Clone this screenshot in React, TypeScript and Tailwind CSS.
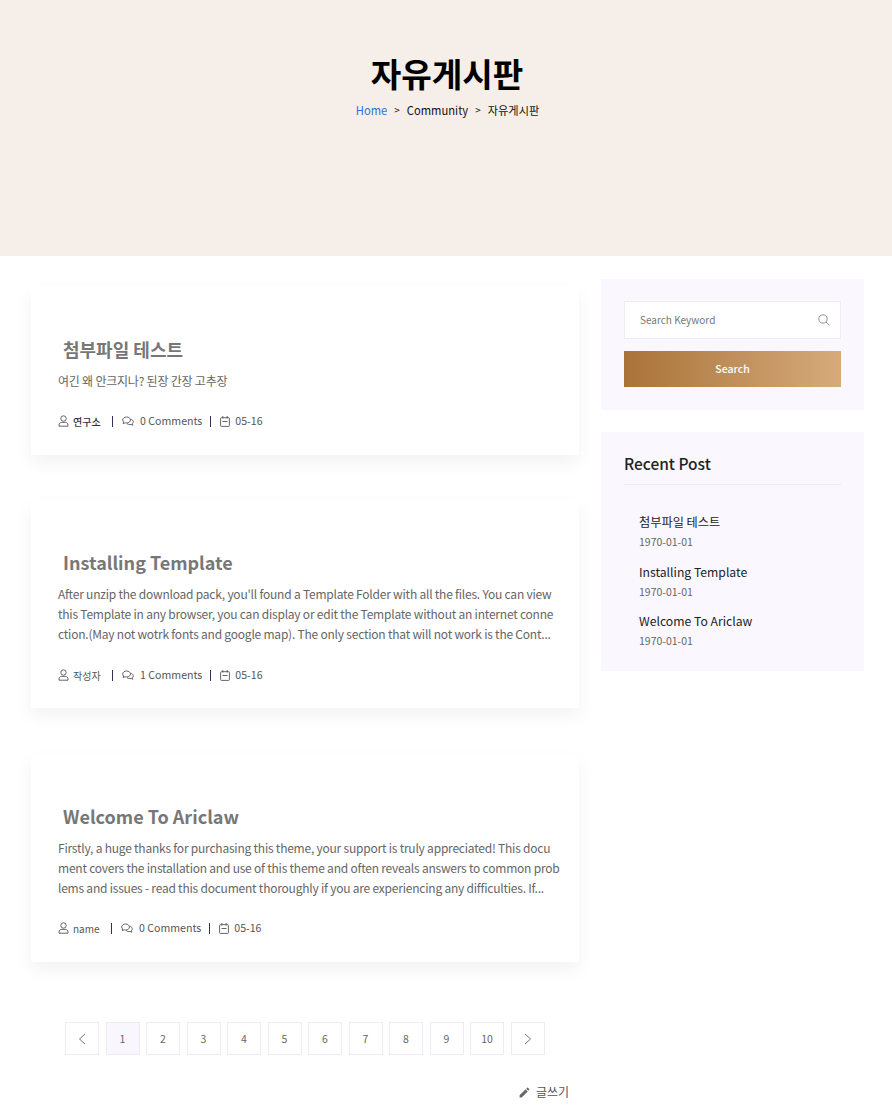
import React from "react";

const font = { fontFamily: '"Noto Sans CJK KR", "Noto Sans", sans-serif' };

function UserIcon() {
  return (
    <svg width="11" height="12" viewBox="0 0 11 12" fill="none" stroke="currentColor" strokeWidth="0.9" className="shrink-0">
      <circle cx="5.5" cy="3.5" r="2.7" />
      <path d="M1 11.2v-1.2c0-1.6 1.2-2.6 2.6-2.6h3.8c1.4 0 2.6 1 2.6 2.6v1.2z" />
    </svg>
  );
}
function ChatIcon() {
  return (
    <svg width="12" height="11" viewBox="0 0 12 11" fill="none" stroke="currentColor" strokeWidth="0.9" className="shrink-0">
      <path d="M4.6 1C2.5 1 .7 2.3.7 4c0 .8.4 1.5 1 2l-.5 1.6 1.9-.8c.5.1 1 .2 1.5.2 2.1 0 3.900-1.300 3.900-3S6.700 1 4.600 1z" />
      <path d="M9.300 3.400c1.200.5 2 1.400 2 2.500 0 .7-.3 1.300-.9 1.800l.5 1.500-1.800-.7c-.4.1-.8.100-1.200.100-1.200 0-2.200-.4-2.900-1" />
    </svg>
  );
}
function CalendarIcon() {
  return (
    <svg width="10" height="11" viewBox="0 0 10 11" fill="none" stroke="currentColor" strokeWidth="0.9" className="shrink-0">
      <rect x="0.6" y="1.700" width="8.800" height="8.700" rx="0.8" />
      <path d="M2.800 0v2.500M7.200 0v2.500M2.500 5.500h5" />
    </svg>
  );
}

function Post({ title, body, author, comments, strongAuthor, className, metaClass }: { title: string; body: string; author: string; comments: string; strongAuthor?: boolean; className: string; metaClass: string }) {
  return (
    <article className={`bg-white shadow-[0_8px_16px_rgba(0,0,0,0.05)] pl-[27px] pr-[15px] ${className}`}>
      <h2 className="text-[18px] leading-[28px] font-bold text-[#777777] pl-[5px]">{title}</h2>
      <p className="text-[12px] tracking-[-0.22px] leading-[20px] text-[#666666] mt-[8px] whitespace-pre-line">{body}</p>
      <div className={`flex items-center h-[20px] text-[10.600px] text-[#555555] ${metaClass}`}>
        <UserIcon />
        <span className={`ml-[4px] mr-[11.500px] text-[10px] ${strongAuthor ? "text-[#333333] font-medium" : ""}`}>{author}</span>
        <span className="w-px h-[11px] bg-[#3b2a5a] mr-[9px]" />
        <ChatIcon />
        <span className="ml-[6px] mr-[8px]">{comments}</span>
        <span className="w-px h-[11px] bg-[#3b2a5a] mr-[9px]" />
        <CalendarIcon />
        <span className="ml-[5px]">05-16</span>
      </div>
    </article>
  );
}

function RecentItem({ title, last }: { title: string; last?: boolean }) {
  return (
    <div className={last ? "" : "mb-[9.500px]"}>
      <div className="text-[12.200px] leading-[20px] text-[#222222]">{title}</div>
      <div className="text-[10.500px] leading-[20px] text-[#666666]">1970-01-01</div>
    </div>
  );
}

function PageBox({ children, active }: { children: React.ReactNode; active?: boolean }) {
  return (
    <div className={`w-[34px] h-[33px] flex items-center justify-center border border-[#eeebf5] text-[10.500px] text-[#666666] ${active ? "bg-[#f9f6fd]" : "bg-white"}`}>
      {children}
    </div>
  );
}

export default function App() {
  return (
    <div style={font} className="w-[892px] h-[1115px] bg-white overflow-hidden">
      <header className="h-[256px] bg-[#f6eee8] flex flex-col items-center pt-[49px]">
        <h1 className="text-[33.200px] leading-[48px] font-bold text-black ml-[2px]">자유게시판</h1>
        <div className="flex items-center mt-[1px] ml-[3px] text-[11.200px] leading-[24px] text-[#111111]">
          <span className="text-[#2f6fdb]">Home</span>
          <span className="mx-[7px] text-[10px]">&gt;</span>
          <span>Community</span>
          <span className="mx-[7px] text-[10px]">&gt;</span>
          <span>자유게시판</span>
        </div>
      </header>

      <div className="flex items-start pl-[31px] gap-[22px]">
        <main className="w-[548px] shrink-0">
          <Post className="mt-[29px] h-[170px] pt-[50px]" metaClass="mt-[20px]" title="첨부파일 테스트" body="여긴 왜 안크지나? 된장 간장 고추장" author="연구소" comments="0 Comments" strongAuthor />
          <Post className="mt-[45px] h-[208px] pt-[48px]" metaClass="mt-[21px]" title="Installing Template" body={"After unzip the download pack, you'll found a Template Folder with all the files. You can view\nthis Template in any browser, you can display or edit the Template without an internet conne\nction.(May not wotrk fonts and google map). The only section that will not work is the Cont..."} author="작성자" comments="1 Comments" />
          <Post className="mt-[46px] h-[208px] pt-[48px]" metaClass="mt-[20px]" title="Welcome To Ariclaw" body={"Firstly, a huge thanks for purchasing this theme, your support is truly appreciated! This docu\nment covers the installation and use of this theme and often reveals answers to common prob\nlems and issues - read this document thoroughly if you are experiencing any difficulties. If..."} author="name" comments="0 Comments" />

          <nav className="flex gap-[6.500px] pl-[34px] mt-[60px]">
            <PageBox>
              <svg width="8" height="12" viewBox="0 0 8 12" fill="none" stroke="currentColor" strokeWidth="0.9"><path d="M7 1L1.500 6 7 11" /></svg>
            </PageBox>
            <PageBox active>1</PageBox>
            {["2", "3", "4", "5", "6", "7", "8", "9", "10"].map((n) => (
              <PageBox key={n}>{n}</PageBox>
            ))}
            <PageBox>
              <svg width="8" height="12" viewBox="0 0 8 12" fill="none" stroke="currentColor" strokeWidth="0.9"><path d="M1 1l5.500 5L1 11" /></svg>
            </PageBox>
          </nav>
          <div className="flex items-center justify-end gap-[5px] pr-[10px] mt-[27px] text-[12px] leading-[20px] text-[#555555]">
            <svg width="13" height="13" viewBox="0 0 24 24" fill="#666666"><path d="M3 17.250V21h3.750L17.810 9.940l-3.750-3.750L3 17.250zM20.710 7.040a1 1 0 000-1.410l-2.340-2.340a1 1 0 00-1.410 0l-1.830 1.830 3.750 3.750 1.830-1.830z" /></svg>
            <span>글쓰기</span>
          </div>
        </main>

        <aside className="w-[263px] shrink-0 pt-[23px]">
          <div className="bg-[#faf8fe] h-[131px] px-[23px] pt-[22px]">
            <div className="h-[38px] bg-white border border-[#efecf6] flex items-center justify-between pl-[15px] pr-[10px] pb-[1px]">
              <span className="text-[10px] text-[#777777]">Search Keyword</span>
              <svg width="12" height="12" viewBox="0 0 12 12" fill="none" stroke="#888888" strokeWidth="0.9"><circle cx="5" cy="5" r="4.200" /><path d="M8 8l3.500 3.500" /></svg>
            </div>
            <div className="h-[36px] mt-[12px] bg-gradient-to-r from-[#a97338] to-[#d6ab7b] flex items-center justify-center text-[10.500px] font-medium text-white">Search</div>
          </div>
          <div className="bg-[#faf8fe] h-[239px] mt-[22px] px-[23px] pt-[18px]">
            <h3 className="text-[15.500px] leading-[26px] font-medium text-[#222222] pb-[8px] border-b border-[#edeaf3]">Recent Post</h3>
            <div className="pl-[15px] pt-[27px]">
              <RecentItem title="첨부파일 테스트" />
              <RecentItem title="Installing Template" />
              <RecentItem title="Welcome To Ariclaw" last />
            </div>
          </div>
        </aside>
      </div>
    </div>
  );
}
